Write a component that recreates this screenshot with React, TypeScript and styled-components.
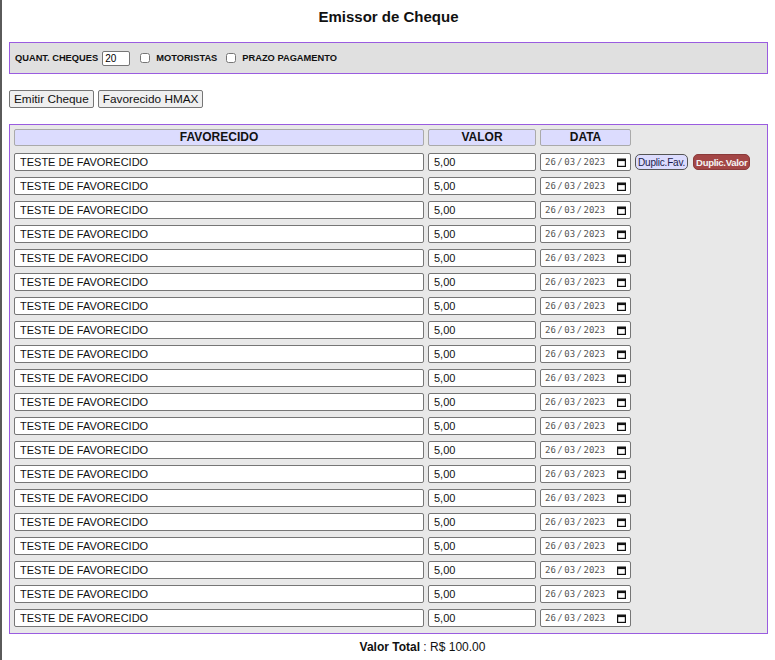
import React from "react";
import styled, { createGlobalStyle } from "styled-components";

const GlobalStyle = createGlobalStyle`
    html, body {
        margin: 0;
        padding: 0;
        background: #ffffff;
    }
    body {
        border-left: 2px solid #5a5a5a;
        padding: 0 7px 0 7px;
        min-height: 660px;
        box-sizing: border-box;
        font-family: "Liberation Sans", Arial, sans-serif;
        color: #111;
    }
`;

interface Cheque {
    favorecido: string;
    valor: string;
    data: [string, string, string];
}

const cheques: Cheque[] = Array.from({ length: 20 }, () => ({
    favorecido: "TESTE DE FAVORECIDO",
    valor: "5,00",
    data: ["26", "03", "2023"],
}));


function CalendarIcon() {
    return (
        <svg width="9" height="9" viewBox="0 0 9 9">
            <rect x="0.6" y="1.1" width="7.8" height="7.3" fill="none" stroke="#111" strokeWidth="1.2" />
            <rect x="0.6" y="1.1" width="7.8" height="2" fill="#111" />
        </svg>
    );
}


export default function App() {
    const total = cheques.reduce((acc, c) => acc + parseFloat(c.valor.replace(",", ".")), 0);

    return (
        <>
            <GlobalStyle />
            <Title>Emissor de Cheque</Title>

            <OptionsPanel>
                <OptionLabel>QUANT. CHEQUES</OptionLabel>
                <QuantInput defaultValue="20" />
                <Check type="checkbox" />
                <OptionLabel $wide>MOTORISTAS</OptionLabel>
                <Check type="checkbox" />
                <OptionLabel>PRAZO PAGAMENTO</OptionLabel>
            </OptionsPanel>

            <Actions>
                <ActionButton>Emitir Cheque</ActionButton>
                <ActionButton>Favorecido HMAX</ActionButton>
            </Actions>

            <ChequePanel>
                <ChequeGrid>
                    <HeaderCell>FAVORECIDO</HeaderCell>
                    <HeaderCell>VALOR</HeaderCell>
                    <HeaderCell>DATA</HeaderCell>
                    <span />
                    {cheques.map((c, i) => (
                        <React.Fragment key={i}>
                            <Field defaultValue={c.favorecido} />
                            <Field defaultValue={c.valor} />
                            <DateField>
                                <DateText>
                                    <span>{c.data[0]}</span>
                                    <span>/</span>
                                    <span>{c.data[1]}</span>
                                    <span>/</span>
                                    <span>{c.data[2]}</span>
                                </DateText>
                                <CalendarIcon />
                            </DateField>
                            {i === 0 ? (
                                <RowTools>
                                    <DupFav>Duplic.Fav.</DupFav>
                                    <DupValor>Duplic.Valor</DupValor>
                                </RowTools>
                            ) : <span />}
                        </React.Fragment>
                    ))}
                </ChequeGrid>
            </ChequePanel>

            <Total>
                <b>Valor Total</b> : R$ {total.toFixed(2)}
            </Total>
        </>
    );
}


const Title = styled.h1`
    margin: 0;
    padding-top: 7px;
    height: 20px;
    line-height: 20px;
    margin-bottom: 15px;
    text-align: center;
    font-size: 15px;
    font-weight: bold;
    color: #111;
`;

const OptionsPanel = styled.div`
    height: 32px;
    box-sizing: border-box;
    border: 1px solid #9a5ce0;
    background: #e0e0e0;
    display: flex;
    align-items: center;
    padding-left: 5px;
`;

const OptionLabel = styled.span<{ $wide?: boolean }>`
    font-size: 9.3px;
    font-weight: bold;
    margin-right: ${(p) => (p.$wide ? "9px" : "4px")};
    color: #111;
`;

const QuantInput = styled.input`
    width: 28px;
    height: 15px;
    box-sizing: border-box;
    border: 1px solid #767676;
    border-radius: 2px;
    padding: 0 2px;
    font-family: "Liberation Sans", Arial, sans-serif;
    font-size: 10px;
    margin: 0 10px 0 0;
    background: #fff;
`;

const Check = styled.input`
    width: 10px;
    height: 10px;
    margin: 0 6px 0 0;
`;

const Actions = styled.div`
    display: flex;
    gap: 4px;
    margin: 16px 0 16px 0;
`;

const ActionButton = styled.button`
    height: 18px;
    padding: 0 4px;
    border: 1px solid #767676;
    border-radius: 2px;
    background: #efefef;
    font-family: "Liberation Sans", Arial, sans-serif;
    font-size: 11.8px;
    color: #111;
`;

const ChequePanel = styled.div`
    border: 1px solid #9a5ce0;
    background: #e8e8e8;
    padding: 4px 4px 6px 4px;
`;

const ChequeGrid = styled.div`
    display: grid;
    grid-template-columns: 410px 108px 91px 1fr;
    column-gap: 4px;
    row-gap: 6px;
    align-items: center;

    & > :nth-child(-n + 4) {
        margin-bottom: 1px;
    }
`;

const HeaderCell = styled.div`
    height: 17px;
    box-sizing: border-box;
    border: 1px solid #aaaaaa;
    border-radius: 2px;
    background: #dcdcfe;
    text-align: center;
    font-size: 12px;
    font-weight: bold;
    line-height: 15px;
    color: #111;
`;

const Field = styled.input`
    height: 18px;
    box-sizing: border-box;
    width: 100%;
    margin: 0;
    border: 1px solid #767676;
    border-radius: 2px;
    padding: 0 5px;
    background: #fff;
    font-family: "Liberation Sans", Arial, sans-serif;
    font-size: 11px;
    color: #111;
`;

const DateField = styled.div`
    height: 18px;
    box-sizing: border-box;
    border: 1px solid #767676;
    border-radius: 2px;
    background: #fff;
    display: flex;
    align-items: center;
    justify-content: space-between;
    padding: 0 4px 0 4px;
`;

const DateText = styled.span`
    display: flex;
    gap: 1.5px;
    font-family: "DejaVu Sans Mono", "Liberation Mono", monospace;
    font-size: 9px;
    color: #555;
`;

const RowTools = styled.div`
    display: flex;
    gap: 5px;
    align-items: center;
`;

const DupFav = styled.button`
    height: 16px;
    padding: 0 2px;
    border: 1px solid #555;
    border-radius: 5px;
    background: #dcdcfe;
    font-family: "Liberation Sans", Arial, sans-serif;
    font-size: 10px;
    letter-spacing: -0.2px;
    color: #1a1a4a;
`;

const DupValor = styled.button`
    height: 16px;
    padding: 0 2px;
    border: 1px solid #8a3a3a;
    border-radius: 5px;
    background: #a34646;
    font-family: "Liberation Sans", Arial, sans-serif;
    font-size: 9.5px;
    letter-spacing: -0.3px;
    font-weight: bold;
    color: #f4f4f4;
`;

const Total = styled.div`
    text-align: center;
    margin-top: 5px;
    padding-left: 68px;
    font-size: 12px;
    line-height: 16px;
    color: #111;
`;
